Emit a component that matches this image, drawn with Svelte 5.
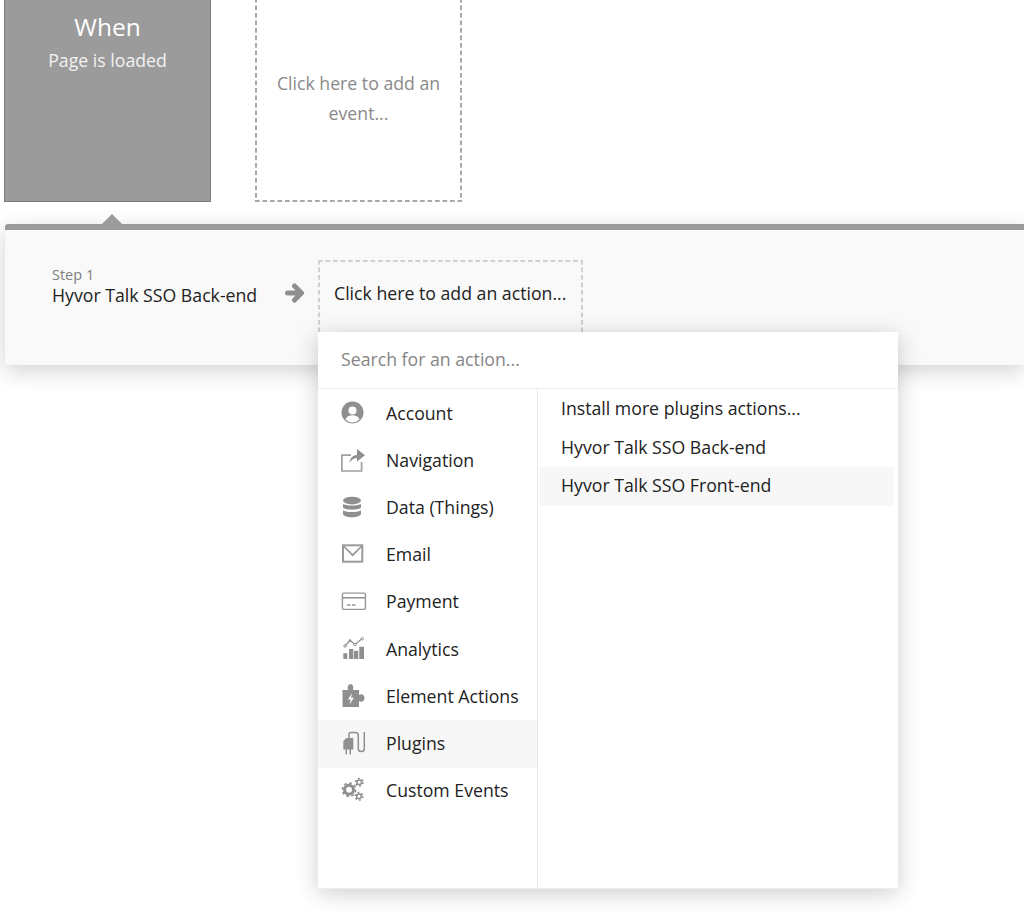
<script>
  const categories = [
    { name: "Account", icon: "account" },
    { name: "Navigation", icon: "navigation" },
    { name: "Data (Things)", icon: "data" },
    { name: "Email", icon: "email" },
    { name: "Payment", icon: "payment" },
    { name: "Analytics", icon: "analytics" },
    { name: "Element Actions", icon: "element" },
    { name: "Plugins", icon: "plugins" },
    { name: "Custom Events", icon: "custom" },
  ];
  const actions = [
    "Install more plugins actions...",
    "Hyvor Talk SSO Back-end",
    "Hyvor Talk SSO Front-end",
  ];
  const activeCategory = "Plugins";
  const activeAction = "Hyvor Talk SSO Front-end";

  // teeth are a dashed ring, so the dash length comes from the circumference
  const dash = (r, teeth) => (Math.PI * r) / teeth;
</script>

{#snippet gear(cx, cy, r, width, teeth)}
  <circle {cx} {cy} {r} fill="none" stroke="#8f8f8f" stroke-width={width} />
  <circle
    {cx}
    {cy}
    r={r + width / 2 + 0.7}
    fill="none"
    stroke="#8f8f8f"
    stroke-width="1.6"
    stroke-dasharray={dash(r + width / 2 + 0.7, teeth)}
  />
{/snippet}

<main class="page">
  <section class="events">
    <div class="event event--active">
      <h2>When</h2>
      <p>Page is loaded</p>
    </div>
    <div class="event event--empty">
      <p>Click here to add an event...</p>
    </div>
  </section>

  <section class="workflow">
    <span class="pointer"></span>
    <div class="steps">
      <div class="step">
        <small>Step 1</small>
        <strong>Hyvor Talk SSO Back-end</strong>
      </div>
      <svg class="arrow" viewBox="0 0 20 20" width="20" height="20">
        <path d="M2.500 10h13M9.500 3l7 7-7 7" fill="none" stroke="#8f8f8f" stroke-width="5" stroke-linecap="round" stroke-linejoin="round" />
      </svg>
      <div class="add-action">Click here to add an action...</div>
    </div>

    <div class="dropdown">
      <div class="search">Search for an action...</div>
      <div class="columns">
        <ul class="categories">
          {#each categories as cat}
            <li class:active={cat.name === activeCategory}>
              <svg viewBox="0 0 24 24" width="24" height="24">
                {#if cat.icon === "account"}
                  <circle cx="11.500" cy="11.500" r="11" fill="#8f8f8f" />
                  <circle cx="11.500" cy="9.500" r="4" fill="#fff" />
                  <path d="M4.500 18.500c1-3 3.800-4.300 7-4.300s6 1.300 7 4.300a9.800 9.800 0 0 1-14 0z" fill="#fff" />
                {:else if cat.icon === "navigation"}
                  <path d="M10 7.200H.9v15.800h19.700v-9" fill="none" stroke="#a0a0a0" stroke-width="1.700" />
                  <path d="M8.500 15c.5-5 3.500-8 7.500-8V1l8 6.200-8 6.300V10c-3 0-5.500 1.500-7.500 5z" fill="#8f8f8f" />
                {:else if cat.icon === "data"}
                  <ellipse cx="11" cy="5.600" rx="9" ry="3.900" fill="#8f8f8f" />
                  <path d="M2 8.800c2 2.400 16 2.400 18 0v3.500c0 3-18 3-18 0z" fill="#8f8f8f" />
                  <path d="M2 15.200c2 2.400 16 2.400 18 0v3.300c0 5-18 5-18 0z" fill="#8f8f8f" />
                {:else if cat.icon === "email"}
                  <rect x="2" y="3.300" width="19.300" height="16.400" fill="none" stroke="#999" stroke-width="2" />
                  <path d="M2.500 4l9.200 9.200L20.800 4" fill="none" stroke="#999" stroke-width="1.700" />
                {:else if cat.icon === "payment"}
                  <rect x="1.400" y="4.100" width="23" height="16.300" rx="1.500" fill="none" stroke="#969696" stroke-width="1.400" />
                  <path d="M1.500 8.800h23" stroke="#969696" stroke-width="1.600" />
                  <path d="M6 16h3.500M11 16h3.500" stroke="#969696" stroke-width="1.300" />
                {:else if cat.icon === "analytics"}
                  <path d="M2.300 16.300h4V22h-4zM8 12h4.300v10H8zM13 13.700h4.300V22H13zM18.300 9.700H23V22h-4.700z" fill="#8f8f8f" />
                  <path d="M4 9l5-5.500 5 4L21.300 1.500" fill="none" stroke="#8f8f8f" stroke-width="1.300" />
                  <circle cx="4" cy="9" r="1.200" fill="#fff" stroke="#8f8f8f" />
                  <circle cx="9" cy="3.500" r="1.200" fill="#8f8f8f" />
                  <circle cx="14" cy="7.500" r="1.200" fill="#fff" stroke="#8f8f8f" />
                  <circle cx="21.300" cy="1.700" r="1.200" fill="#fff" stroke="#8f8f8f" />
                {:else if cat.icon === "element"}
                  <path d="M1.500 6H7c-.8-3 0-5.700 2.500-5.700S12.800 3 12 6h6v5c2-1.500 5.500-.5 5.500 3S20 18.500 18 17v6H1.500z" fill="#8f8f8f" />
                  <path d="M11 9l-4 6.500h2.800l-1.300 5 4.500-6.700h-3z" fill="#fff" />
                {:else if cat.icon === "plugins"}
                  <path d="M2.300 10l3-3h7v11.500H10v5H8.500v-5H6v5H4.500v-5H2.300z" fill="#8f8f8f" />
                  <path d="M8 7.500v-4q0-2 2-2h4.300q3 0 3 3V18q0 2.500 3 2.500t3-2.500V1" fill="none" stroke="#8f8f8f" stroke-width="1.500" />
                {:else}
                  {@render gear(8, 11.700, 4.500, 3, 8)}
                  {@render gear(18.300, 4.300, 2.300, 1.500, 6)}
                  {@render gear(18, 18.300, 2.300, 1.500, 6)}
                {/if}
              </svg>
              <span>{cat.name}</span>
            </li>
          {/each}
        </ul>
        <ul class="actions">
          {#each actions as action}
            <li class:active={action === activeAction}>{action}</li>
          {/each}
        </ul>
      </div>
    </div>
  </section>
</main>

<style>
  :global(body) {
    margin: 0;
    background: #fff;
  }

  .page {
    width: 1024px;
    height: 912px;
    overflow: hidden;
    font-family: "Open Sans", "Noto Sans", sans-serif;
    font-size: 17.7px;
    color: #222;
  }

  .events {
    display: flex;
    gap: 44px;
    height: 202px;
    padding-left: 4px;
  }

  .event {
    width: 207px;
    box-sizing: border-box;
    text-align: center;
    margin-top: -2px;
  }

  .event--active {
    background: #9b9b9b;
    border: 1px solid #7c7c7c;
    color: #fff;
    padding-top: 12px;
  }

  .event--active h2 {
    margin: 0;
    font-size: 24.500px;
    font-weight: 400;
    line-height: 31px;
  }

  .event--active p {
    margin: 4px 0 0;
    line-height: 28px;
    color: #f2f2f2;
  }

  /* dashes in the reference are longer and heavier than a native dashed border */
  .event--empty,
  .add-action {
    background-image:
      linear-gradient(to right, var(--dash) 5px, transparent 5px),
      linear-gradient(to right, var(--dash) 5px, transparent 5px),
      linear-gradient(to bottom, var(--dash) 5px, transparent 5px),
      linear-gradient(to bottom, var(--dash) 5px, transparent 5px);
    background-size:
      7.500px 2px,
      7.500px 2px,
      2px 7.500px,
      2px 7.500px;
    background-position:
      0 0,
      0 100%,
      0 0,
      100% 0;
    background-repeat: repeat-x, repeat-x, repeat-y, repeat-y;
  }

  .event--empty {
    --dash: #a8a8a8;
    display: flex;
    align-items: center;
    justify-content: center;
    padding: 0 15px;
  }

  .event--empty p {
    margin: 0;
    line-height: 30px;
    color: #8a8a8a;
    position: relative;
    top: -2px;
  }

  .workflow {
    position: relative;
    margin: 22px 0 0 5px;
    height: 141px;
    box-sizing: border-box;
    background: #f9f9f9;
    border-top: 6px solid #9b9b9b;
    border-top-left-radius: 3px;
    box-shadow: 0 6px 22px rgba(0, 0, 0, 0.18);
  }

  .pointer {
    position: absolute;
    left: 97px;
    top: -16px;
    border: 10px solid transparent;
    border-top: 0;
    border-bottom-color: #9b9b9b;
  }

  .steps {
    display: flex;
    align-items: flex-start;
    padding: 30px 0 0 47px;
  }

  .step {
    display: flex;
    flex-direction: column;
    width: 233px;
    padding-top: 7px;
  }

  .step small {
    font-size: 14.500px;
    line-height: 16px;
    color: #808080;
  }

  .step strong {
    font-weight: 400;
    line-height: 24px;
    color: #222;
  }

  .arrow {
    margin: 23px 0 0 0;
    flex: none;
  }

  .add-action {
    --dash: #d0d0d0;
    margin-left: 13px;
    width: 265px;
    height: 80px;
    box-sizing: border-box;
    padding: 20px 0 0 16px;
    line-height: 26px;
    white-space: nowrap;
    color: #222;
  }

  .dropdown {
    position: absolute;
    left: 313px;
    top: 102px;
    width: 580px;
    height: 557px;
    display: flex;
    flex-direction: column;
    background: #fff;
    box-shadow: 0 4px 22px rgba(0, 0, 0, 0.2);
  }

  .search {
    height: 57px;
    flex: none;
    box-sizing: border-box;
    padding: 14px 0 0 23px;
    line-height: 26px;
    color: #858585;
    border-bottom: 1px solid #ededed;
  }

  .columns {
    flex: 1;
    display: flex;
    border-bottom: 1px solid #ededed;
  }

  ul {
    list-style: none;
    margin: 0;
    padding: 0;
  }

  .categories {
    width: 220px;
    box-sizing: border-box;
    padding-top: 1px;
    border-right: 1px solid #e8e8e8;
  }

  .categories li {
    display: flex;
    align-items: center;
    gap: 21px;
    height: 47.200px;
    box-sizing: border-box;
    padding: 0 0 2px 23px;
    color: #222;
  }

  .categories li.active {
    background: #f7f7f7;
  }

  .categories svg {
    overflow: visible;
    flex: none;
  }

  .actions {
    flex: 1;
    padding: 1px 4px 0 1px;
  }

  .actions li {
    height: 38.500px;
    line-height: 37px;
    padding-left: 22px;
    color: #222;
  }

  .actions li.active {
    background: #f7f7f7;
  }
</style>
